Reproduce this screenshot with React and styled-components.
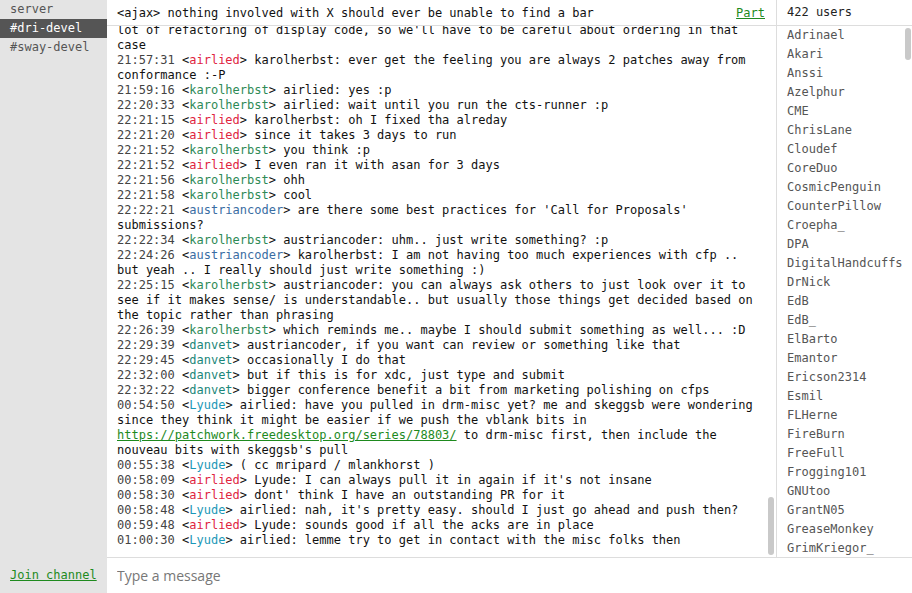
import React from 'react';
import styled, { createGlobalStyle } from 'styled-components';

const GlobalStyle = createGlobalStyle`
  html, body, #root {
    margin: 0;
    height: 100%;
  }
  body {
    font-family: "DejaVu Sans Mono", "Liberation Mono", monospace;
    font-size: 12px;
    color: #111;
    background: #fff;
  }
`;

const mono = `"DejaVu Sans Mono", "Liberation Mono", monospace`;

const Shell = styled.div`
  display: flex;
  height: 100vh;
  overflow: hidden;
`;

const Sidebar = styled.nav`
  width: 107px;
  flex-shrink: 0;
  display: flex;
  flex-direction: column;
  background: #e4e4e4;
`;

const ChannelList = styled.ul`
  flex: 1;
  margin: 0;
  padding: 0;
  list-style: none;
`;

const Channel = styled.li`
  height: 19px;
  line-height: 19px;
  padding: 0 10px;
  color: ${(p) => (p.$active ? '#fff' : '#555')};
  background: ${(p) => (p.$active ? '#555' : 'transparent')};
  white-space: nowrap;
`;

const JoinRow = styled.div`
  height: 36px;
  display: flex;
  align-items: center;
  padding: 0 10px;
`;

const Link = styled.a`
  color: #1e8a1e;
  text-decoration: underline;
  font-family: ${mono};
`;

const Content = styled.div`
  flex: 1;
  display: flex;
  flex-direction: column;
  min-width: 0;
`;

const Body = styled.div`
  flex: 1;
  display: flex;
  min-height: 0;
`;

const Chat = styled.section`
  flex: 1;
  display: flex;
  flex-direction: column;
  min-width: 0;
`;

const TopBar = styled.header`
  height: 25px;
  flex-shrink: 0;
  display: flex;
  align-items: center;
  justify-content: space-between;
  padding: 0 11px 0 10px;
  border-bottom: 1px solid #ddd;
  white-space: nowrap;
`;

const Scroller = styled.div`
  position: relative;
  flex: 1;
  min-height: 0;
  overflow: hidden;
`;

const Messages = styled.div`
  height: 100%;
  box-sizing: border-box;
  display: flex;
  flex-direction: column;
  justify-content: flex-end;
  padding: 0 19px 9px 10px;
`;

const Line = styled.div`
  line-height: 15px;
  word-wrap: break-word;
`;

const Time = styled.span`
  color: #444;
`;

const Nick = styled.span`
  color: ${(p) => p.$color};
`;

const Thumb = styled.div`
  position: absolute;
  right: ${(p) => p.$right}px;
  top: ${(p) => (p.$top != null ? `${p.$top}px` : 'auto')};
  bottom: ${(p) => (p.$bottom != null ? `${p.$bottom}px` : 'auto')};
  width: 6px;
  height: ${(p) => p.$height}px;
  border-radius: 3px;
  background: #c9c9c9;
`;

const Users = styled.aside`
  width: 135px;
  flex-shrink: 0;
  display: flex;
  flex-direction: column;
  border-left: 1px solid #ddd;
`;

const UsersHeader = styled.div`
  height: 25px;
  line-height: 25px;
  flex-shrink: 0;
  padding: 0 10px;
  border-bottom: 1px solid #ddd;
  color: #222;
`;

const UserList = styled.ul`
  margin: 0;
  padding: 0;
  list-style: none;
`;

const User = styled.li`
  height: 19px;
  line-height: 19px;
  padding: 0 10px;
  color: #555;
  white-space: nowrap;
`;

const Composer = styled.div`
  height: 35px;
  flex-shrink: 0;
  display: flex;
  align-items: center;
  border-top: 1px solid #ddd;
`;

const Input = styled.input`
  flex: 1;
  height: 100%;
  border: none;
  outline: none;
  padding: 0 10px;
  font-family: "Open Sans", "Noto Sans", sans-serif;
  font-size: 14px;
  color: #111;
  background: transparent;

  &::placeholder {
    color: #777;
  }
`;

const colors = {
  airlied: '#e0243f',
  karolherbst: '#2e8a56',
  austriancoder: '#3a6da3',
  danvet: '#1b877a',
  Lyude: '#1b98b8',
};

const log = [
  ['21:55:12', 'karolherbst', "airlied: well, I'd rather wait for the atomic stuff, there's a lot of refactoring of display code, so we'll have to be careful about ordering in that case"],
  ['21:57:31', 'airlied', 'karolherbst: ever get the feeling you are always 2 patches away from conformance :-P'],
  ['21:59:16', 'karolherbst', 'airlied: yes :p'],
  ['22:20:33', 'karolherbst', 'airlied: wait until you run the cts-runner :p'],
  ['22:21:15', 'airlied', 'karolherbst: oh I fixed tha alreday'],
  ['22:21:20', 'airlied', 'since it takes 3 days to run'],
  ['22:21:52', 'karolherbst', 'you think :p'],
  ['22:21:52', 'airlied', 'I even ran it with asan for 3 days'],
  ['22:21:56', 'karolherbst', 'ohh'],
  ['22:21:58', 'karolherbst', 'cool'],
  ['22:22:21', 'austriancoder', "are there some best practices for 'Call for Proposals' submissions?"],
  ['22:22:34', 'karolherbst', 'austriancoder: uhm.. just write something? :p'],
  ['22:24:26', 'austriancoder', 'karolherbst: I am not having too much experiences with cfp .. but yeah .. I really should just write something :)'],
  ['22:25:15', 'karolherbst', 'austriancoder: you can always ask others to just look over it to see if it makes sense/ is understandable.. but usually those things get decided based on the topic rather than phrasing'],
  ['22:26:39', 'karolherbst', 'which reminds me.. maybe I should submit something as well... :D'],
  ['22:29:39', 'danvet', 'austriancoder, if you want can review or something like that'],
  ['22:29:45', 'danvet', 'occasionally I do that'],
  ['22:32:00', 'danvet', 'but if this is for xdc, just type and submit'],
  ['22:32:22', 'danvet', 'bigger conference benefit a bit from marketing polishing on cfps'],
  ['00:54:50', 'Lyude', [
    'airlied: have you pulled in drm-misc yet? me and skeggsb were wondering since they think it might be easier if we push the vblank bits in ',
    { href: 'https://patchwork.freedesktop.org/series/78803/' },
    " to drm-misc first, then include the nouveau bits with skeggsb's pull",
  ]],
  ['00:55:38', 'Lyude', '( cc mripard / mlankhorst )'],
  ['00:58:09', 'airlied', "Lyude: I can always pull it in again if it's not insane"],
  ['00:58:30', 'airlied', "dont' think I have an outstanding PR for it"],
  ['00:58:48', 'Lyude', "airlied: nah, it's pretty easy. should I just go ahead and push then?"],
  ['00:59:48', 'airlied', 'Lyude: sounds good if all the acks are in place'],
  ['01:00:30', 'Lyude', 'airlied: lemme try to get in contact with the misc folks then'],
];

const users = [
  'Adrinael', 'Akari', 'Anssi', 'Azelphur', 'CME', 'ChrisLane', 'Cloudef',
  'CoreDuo', 'CosmicPenguin', 'CounterPillow', 'Croepha_', 'DPA',
  'DigitalHandcuffs', 'DrNick', 'EdB', 'EdB_', 'ElBarto', 'Emantor',
  'Ericson2314', 'Esmil', 'FLHerne', 'FireBurn', 'FreeFull', 'Frogging101',
  'GNUtoo', 'GrantN05', 'GreaseMonkey', 'GrimKriegor_',
];

function renderText(text) {
  if (typeof text === 'string') return text;
  return text.map((part, i) =>
    typeof part === 'string' ? (
      part
    ) : (
      <Link key={i} href={part.href}>
        {part.href}
      </Link>
    )
  );
}

export default function App() {
  return (
    <>
      <GlobalStyle />
      <Shell>
        <Sidebar>
          <ChannelList>
            <Channel>server</Channel>
            <Channel $active>#dri-devel</Channel>
            <Channel>#sway-devel</Channel>
          </ChannelList>
          <JoinRow>
            <Link href="#">Join channel</Link>
          </JoinRow>
        </Sidebar>
        <Content>
          <Body>
            <Chat>
              <TopBar>
                <span>&lt;ajax&gt; nothing involved with X should ever be unable to find a bar</span>
                <Link href="#">Part</Link>
              </TopBar>
              <Scroller>
                <Messages>
                  {log.map(([time, nick, text], i) => (
                    <Line key={i}>
                      <Time>{time}</Time> &lt;<Nick $color={colors[nick]}>{nick}</Nick>&gt; {renderText(text)}
                    </Line>
                  ))}
                </Messages>
                <Thumb $right={2} $bottom={2} $height={58} />
              </Scroller>
            </Chat>
            <Users>
              <UsersHeader>422 users</UsersHeader>
              <Scroller>
                <UserList>
                  {users.map((u) => (
                    <User key={u}>{u}</User>
                  ))}
                </UserList>
                <Thumb $right={1} $top={2} $height={32} />
              </Scroller>
            </Users>
          </Body>
          <Composer>
            <Input placeholder="Type a message" />
          </Composer>
        </Content>
      </Shell>
    </>
  );
}
